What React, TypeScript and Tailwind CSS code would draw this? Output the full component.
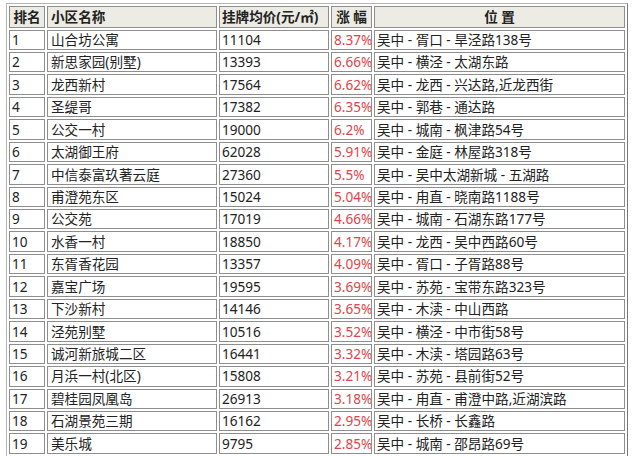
import React from "react";

const rows: [string, string, string, string, string][] = [
  ["1", "山合坊公寓", "11104", "8.37%", "吴中 - 胥口 - 旱泾路138号"],
  ["2", "新思家园(别墅)", "13393", "6.66%", "吴中 - 横泾 - 太湖东路"],
  ["3", "龙西新村", "17564", "6.62%", "吴中 - 龙西 - 兴达路,近龙西街"],
  ["4", "圣缇哥", "17382", "6.35%", "吴中 - 郭巷 - 通达路"],
  ["5", "公交一村", "19000", "6.2%", "吴中 - 城南 - 枫津路54号"],
  ["6", "太湖御王府", "62028", "5.91%", "吴中 - 金庭 - 林屋路318号"],
  ["7", "中信泰富玖著云庭", "27360", "5.5%", "吴中 - 吴中太湖新城 - 五湖路"],
  ["8", "甫澄苑东区", "15024", "5.04%", "吴中 - 甪直 - 晓南路1188号"],
  ["9", "公交苑", "17019", "4.66%", "吴中 - 城南 - 石湖东路177号"],
  ["10", "水香一村", "18850", "4.17%", "吴中 - 龙西 - 吴中西路60号"],
  ["11", "东胥香花园", "13357", "4.09%", "吴中 - 胥口 - 子胥路88号"],
  ["12", "嘉宝广场", "19595", "3.69%", "吴中 - 苏苑 - 宝带东路323号"],
  ["13", "下沙新村", "14146", "3.65%", "吴中 - 木渎 - 中山西路"],
  ["14", "泾苑别墅", "10516", "3.52%", "吴中 - 横泾 - 中市街58号"],
  ["15", "诚河新旅城二区", "16441", "3.32%", "吴中 - 木渎 - 塔园路63号"],
  ["16", "月浜一村(北区)", "15808", "3.21%", "吴中 - 苏苑 - 县前街52号"],
  ["17", "碧桂园凤凰岛", "26913", "3.18%", "吴中 - 甪直 - 甫澄中路,近湖滨路"],
  ["18", "石湖景苑三期", "16162", "2.95%", "吴中 - 长桥 - 长鑫路"],
  ["19", "美乐城", "9795", "2.85%", "吴中 - 城南 - 邵昂路69号"],
];

const cell =
  "h-[20.44px] border border-[#8e8e8e] bg-white flex items-center pl-[2px] whitespace-nowrap overflow-hidden";
const head =
  "h-[21.5px] border border-[#8e8e8e] bg-[#ecebe4] flex items-center font-bold whitespace-nowrap overflow-hidden";

export default function App() {
  return (
    <div
      className="w-[640px] h-[456px] bg-white overflow-hidden pl-[6px] pt-[3px] text-[#222] text-[13.6px] leading-none"
      style={{ fontFamily: '"Noto Sans", "Noto Sans CJK SC", sans-serif' }}
    >
      <div className="w-[622px] border border-t-[#b4b4b4] border-l-[#b4b4b4] border-r-[#7a7a7a] border-b-[#7a7a7a] p-[2px] grid grid-cols-[36px_170px_110px_41px_251px] gap-[2px]">
        <div className={`${head} justify-center`}>排名</div>
        <div className={`${head} pl-[3px]`}>小区名称</div>
        <div className={`${head} pl-[2px]`}>挂牌均价(元/㎡)</div>
        <div className={`${head} justify-center`}>涨 幅</div>
        <div className={`${head} justify-center`}>位 置</div>
        {rows.map((r) => (
          <React.Fragment key={r[0]}>
            <div className={cell}>{r[0]}</div>
            <div className={`${cell} pl-[3px]`}>{r[1]}</div>
            <div className={cell}>{r[2]}</div>
            <div className={`${cell} text-[#e0444a]`}>{r[3]}</div>
            <div className={cell}>{r[4]}</div>
          </React.Fragment>
        ))}
      </div>
    </div>
  );
}
